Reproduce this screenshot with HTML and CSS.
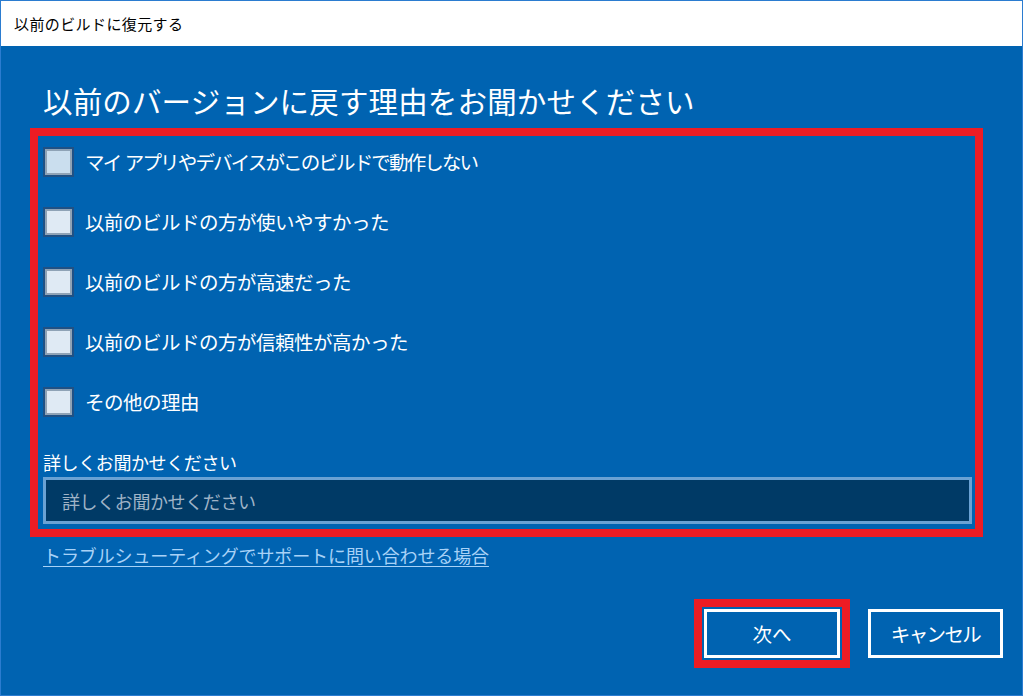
FILE: index.html
```html
<!DOCTYPE html>
<html lang="ja">
<head>
<meta charset="utf-8">
<title>以前のビルドに復元する</title>
<link rel="stylesheet" href="styles.css">
</head>
<body>
<div class="window">
  <div class="titlebar">以前のビルドに復元する</div>
  <div class="content">
    <h1 class="heading">以前のバージョンに戻す理由をお聞かせください</h1>
    <div class="reasons highlight">
      <label class="row"><span class="box box-hover"></span><span class="row-text row-text-kana">マイ アプリやデバイスがこのビルドで動作しない</span></label>
      <label class="row"><span class="box"></span><span class="row-text">以前のビルドの方が使いやすかった</span></label>
      <label class="row"><span class="box"></span><span class="row-text">以前のビルドの方が高速だった</span></label>
      <label class="row"><span class="box"></span><span class="row-text">以前のビルドの方が信頼性が高かった</span></label>
      <label class="row"><span class="box"></span><span class="row-text">その他の理由</span></label>
      <div class="field-label">詳しくお聞かせください</div>
      <div class="field"><span class="placeholder">詳しくお聞かせください</span></div>
    </div>
    <a class="link" href="#">トラブルシューティングでサポートに問い合わせる場合</a>
    <div class="actions">
      <div class="btn-highlight"><button class="btn btn-next">次へ</button></div>
      <button class="btn btn-cancel">キャンセル</button>
    </div>
  </div>
</div>
</body>
</html>
```
FILE: styles.css
```css
html, body {
  margin: 0;
  padding: 0;
}
body {
  font-family: "Noto Sans CJK JP", "Noto Sans", sans-serif;
  background: #ffffff;
}
.window {
  width: 1023px;
  height: 696px;
  box-sizing: border-box;
  border: 1px solid #2b7cd0;
  display: flex;
  flex-direction: column;
  background: #0063b1;
}
.titlebar {
  height: 45px;
  background: #ffffff;
  color: #000000;
  font-size: 15px;
  line-height: 45px;
  padding-left: 13px;
  letter-spacing: 0.4px;
  flex: none;
}
.content {
  flex: 1;
  display: flex;
  flex-direction: column;
  color: #ffffff;
}
.heading {
  margin: 34px 0 0 42px;
  font-size: 29.5px;
  line-height: 40px;
  font-weight: 400;
  letter-spacing: 0.15px;
  height: 40px;
}
.reasons {
  margin: 8px 0 0 29px;
  width: 953px;
  box-sizing: border-box;
  padding: 11px 3px 5px 5px;
  display: flex;
  flex-direction: column;
}
.highlight {
  border: 8px solid #ed1c24;
}
.row {
  display: flex;
  align-items: center;
  height: 30px;
  margin-bottom: 30px;
}
.row:nth-child(5) {
  margin-bottom: 0;
}
.box {
  width: 31px;
  height: 30px;
  box-sizing: border-box;
  border: 2px solid #1f5185;
  box-shadow: inset 0 0 0 2px #8fa3b6;
  background: #dfeaf4;
  flex: none;
}
.box-hover {
  background: #cadeee;
}
.row-text {
  margin-left: 11px;
  font-size: 19.5px;
  line-height: 30px;
  letter-spacing: -0.5px;
}
.row-text-kana {
  letter-spacing: -1.85px;
  word-spacing: 2px;
}
.field-label {
  margin-top: 33px;
  font-size: 18px;
  line-height: 24px;
  letter-spacing: -0.4px;
}
.field {
  margin: 3px 0 0 0;
  height: 47px;
  box-sizing: border-box;
  border: 3px solid #6aa2d4;
  background: #003a66;
  display: flex;
  align-items: center;
  padding-left: 16px;
}
.placeholder {
  color: #9fb3c6;
  font-size: 18px;
  letter-spacing: -0.4px;
}
.link {
  margin: 6px 0 0 42px;
  align-self: flex-start;
  font-size: 18px;
  line-height: 24px;
  color: #a8d2f7;
  text-decoration: underline;
  text-underline-offset: 3px;
  letter-spacing: -0.12px;
}
.actions {
  margin-top: 32px;
  padding-right: 19px;
  display: flex;
  justify-content: flex-end;
  align-items: center;
  gap: 18px;
}
.btn-highlight {
  border: 8px solid #ed1c24;
  padding: 2px;
}
.btn {
  height: 49px;
  box-sizing: border-box;
  border: 3px solid #ffffff;
  background: #0063b1;
  color: #ffffff;
  font-family: "Noto Sans CJK JP", "Noto Sans", sans-serif;
  font-size: 19.5px;
  padding: 0;
  display: block;
}
.btn-next {
  width: 136px;
}
.btn-cancel {
  width: 135px;
  letter-spacing: -1.6px;
}
```
